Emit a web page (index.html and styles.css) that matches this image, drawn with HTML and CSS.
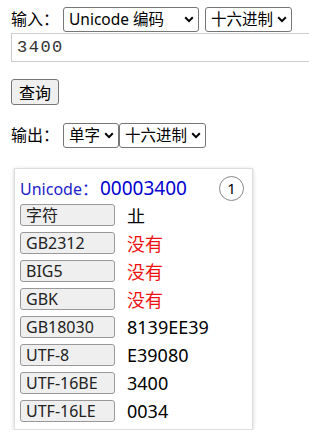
FILE: index.html
```html
<!DOCTYPE html>
<html lang="zh-CN">
<head>
  <meta charset="UTF-8">
  <title>编码查询</title>
  <link rel="stylesheet" href="styles.css">
</head>
<body>
  <div class="row first">
    <span class="label">输入：</span>
    <select class="sel-code">
      <option>Unicode 编码</option>
    </select>
    <select class="sel-base">
      <option>十六进制</option>
    </select>
  </div>
  <input class="code-input" type="text" value="3400">

  <div class="row">
    <button class="query">查询</button>
  </div>

  <div class="row out">
    <span class="label">输出：</span>
    <select class="sel-mode"><option>单字</option></select><select class="sel-base"><option>十六进制</option></select>
  </div>

  <div class="card">
    <div class="card-head">
      <span class="uni">Unicode：</span><span class="uni-val">00003400</span>
      <span class="num">1</span>
    </div>
    <div class="item"><span class="tag">字符</span><span class="val">㐀</span></div>
    <div class="item"><span class="tag">GB2312</span><span class="val none">没有</span></div>
    <div class="item"><span class="tag">BIG5</span><span class="val none">没有</span></div>
    <div class="item"><span class="tag">GBK</span><span class="val none">没有</span></div>
    <div class="item"><span class="tag">GB18030</span><span class="val">8139EE39</span></div>
    <div class="item"><span class="tag">UTF-8</span><span class="val">E39080</span></div>
    <div class="item"><span class="tag">UTF-16BE</span><span class="val">3400</span></div>
    <div class="item"><span class="tag">UTF-16LE</span><span class="val">0034</span></div>
  </div>
</body>
</html>
```

FILE: styles.css
```css
body {
  margin: 0;
  padding: 0 0 0 11px;
  font-family: "Noto Sans", "Noto Sans CJK SC", sans-serif;
  font-size: 16px;
  color: #000;
  background: #fff;
  overflow: hidden;
}

.row {
  display: flex;
  align-items: center;
}

.first {
  margin-top: 7px;
}

.label {
  width: 52px;
  line-height: 25px;
}

select {
  -webkit-appearance: none;
  appearance: none;
  box-sizing: border-box;
  height: 25px;
  font-family: "Noto Sans", "Noto Sans CJK SC", sans-serif;
  font-size: 15.5px;
  line-height: 23px;
  border: 1px solid #767676;
  border-radius: 3px;
  color: #000;
  padding: 0 0 0 5px;
  background: #fff url("data:image/svg+xml;utf8,<svg xmlns='http://www.w3.org/2000/svg' width='10' height='7' viewBox='0 0 10 7'><path d='M1.2 1.3 5 5.1 8.8 1.3' fill='none' stroke='%23000' stroke-width='2'/></svg>") no-repeat right 4px center;
}

.sel-code {
  width: 136px;
  margin-right: 6px;
}

.sel-base {
  width: 87px;
}

.code-input {
  display: block;
  box-sizing: border-box;
  width: 310px;
  height: 29px;
  margin: 1px 0 0 0;
  padding: 0 5px;
  border: 1px solid #ccc;
  font-family: "Liberation Mono", monospace;
  font-size: 17px;
  letter-spacing: 1.5px;
  color: #333;
  outline: none;
}

.query {
  margin-top: 17px;
  width: 48px;
  height: 26px;
  padding: 0;
  font-family: "Noto Sans CJK SC", sans-serif;
  font-size: 16px;
  background: #efefef;
  border: 1px solid #767676;
  border-radius: 3px;
}

.out {
  margin-top: 18px;
}

.sel-mode {
  width: 56px;
}

.card {
  box-sizing: border-box;
  width: 239px;
  margin: 20px 0 0 3px;
  padding: 6px 5px 4px 5px;
  border: 1px solid #ddd;
  box-shadow: 0 1px 4px rgba(0, 0, 0, 0.18);
}

.card-head {
  display: flex;
  align-items: center;
  height: 26px;
}

.uni {
  color: #2222cc;
  font-size: 16px;
}

.uni-val {
  color: #0000d0;
  font-size: 19px;
  margin-left: 2px;
}

.num {
  margin-left: auto;
  margin-right: 3px;
  width: 25px;
  height: 25px;
  box-sizing: border-box;
  border: 1px solid #888;
  border-radius: 50%;
  display: flex;
  align-items: center;
  justify-content: center;
  font-size: 15px;
}

.item {
  display: flex;
  align-items: center;
  height: 28px;
}

.tag {
  box-sizing: border-box;
  width: 95px;
  height: 22px;
  line-height: 20px;
  padding-left: 5px;
  background: #efefef;
  border: 1px solid #999;
  border-radius: 3px;
  font-size: 16px;
  color: #222;
}

.val {
  margin-left: 12px;
  font-size: 18px;
}

.none {
  color: #ee1111;
}
```
